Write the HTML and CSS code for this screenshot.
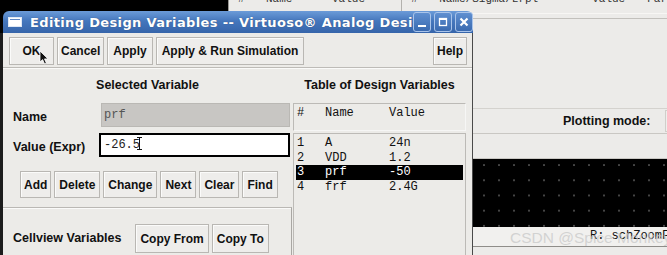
FILE: index.html
```html
<!DOCTYPE html>
<html lang="en">
<head>
    <meta charset="UTF-8">
    <title>Editing Design Variables</title>
    <link rel="stylesheet" href="styles.css">
</head>
<body>
    <div class="desktop">
        <!-- window behind the dialog -->
        <div class="backwin">
            <div class="bw-head">
                <div class="bw-cell first"><span class="c1">#</span><span class="c2">Name</span><span>Value</span></div>
                <div class="bw-cell"><span class="c1">#</span><span class="c3">Name/Sigma/Lrpl</span><span class="c4">Value</span><span>Par</span></div>
            </div>
            <div class="bw-top"></div>
            <div class="bw-mode">
                <span class="bw-label">Plotting mode:</span>
                <span class="bw-box"></span>
            </div>
            <div class="bw-gap"></div>
            <div class="bw-canvas"></div>
            <div class="bw-status">R: schZoomF</div>
            <div class="bw-bottom"></div>
        </div>

        <!-- dialog -->
        <div class="dialog">
            <div class="titlebar">
                <svg class="ticon" width="14" height="10" viewBox="0 0 14 10">
                    <rect x="0.5" y="0.5" width="13" height="9" fill="#fff" stroke="#dfe8f5"/>
                    <rect x="2" y="2" width="10" height="1" fill="#5d86c2"/>
                </svg>
                <span class="ttext">Editing Design Variables -- Virtuoso® Analog Desi</span>
                <div class="tbtns">
                    <span class="tbtn"><svg width="14" height="16" viewBox="0 0 14 16"><rect x="3" y="11" width="8" height="2" fill="#fff"/></svg></span>
                    <span class="tbtn"><svg width="14" height="16" viewBox="0 0 14 16"><rect x="3.5" y="4.5" width="7" height="7" fill="none" stroke="#fff" stroke-width="1.3"/><rect x="3.5" y="4.5" width="7" height="1.5" fill="#fff"/></svg></span>
                    <span class="tbtn"><svg width="14" height="16" viewBox="0 0 14 16"><path d="M3.5 4.5 L10.5 11.5 M10.5 4.5 L3.5 11.5" stroke="#fff" stroke-width="2.2"/></svg></span>
                </div>
            </div>
            <div class="dlg-body">
                <div class="toolbar">
                    <button class="btn ok">OK</button>
                    <button class="btn cancel">Cancel</button>
                    <button class="btn">Apply</button>
                    <button class="btn">Apply &amp; Run Simulation</button>
                    <button class="btn help">Help</button>
                </div>
                <div class="main">
                    <div class="left">
                        <div class="heading">Selected Variable</div>
                        <div class="field">
                            <span class="label">Name</span>
                            <div class="entry readonly">prf</div>
                        </div>
                        <div class="field">
                            <span class="label">Value (Expr)</span>
                            <div class="entry active">-26.5<svg class="ibeam" width="5" height="13" viewBox="0 0 5 13"><path d="M0 0.5 H5 M2.5 0.5 V12.5 M0 12.5 H5" stroke="#111" stroke-width="1" fill="none"/></svg></div>
                        </div>
                        <div class="actions">
                            <button class="btn sm add">Add</button>
                            <button class="btn sm">Delete</button>
                            <button class="btn sm">Change</button>
                            <button class="btn sm">Next</button>
                            <button class="btn sm">Clear</button>
                            <button class="btn sm">Find</button>
                        </div>
                        <div class="cellview">
                            <span class="label">Cellview Variables</span>
                            <button class="btn cv">Copy From</button>
                            <button class="btn cv">Copy To</button>
                        </div>
                    </div>
                    <div class="right">
                        <div class="heading">Table of Design Variables</div>
                        <div class="tbl-head">
                            <div class="row"><span class="num">#</span><span class="nm">Name</span><span>Value</span></div>
                        </div>
                        <div class="tbl-list">
                            <div class="row"><span class="num">1</span><span class="nm">A</span><span>24n</span></div>
                            <div class="row"><span class="num">2</span><span class="nm">VDD</span><span>1.2</span></div>
                            <div class="row sel"><span class="num">3</span><span class="nm">prf</span><span>-50</span></div>
                            <div class="row"><span class="num">4</span><span class="nm">frf</span><span>2.4G</span></div>
                        </div>
                    </div>
                </div>
            </div>
        </div>

        <svg class="pointer" width="11" height="15" viewBox="0 0 11 15">
            <path d="M1 1 L1 12 L3.6 9.6 L5.6 14 L7.4 13.2 L5.5 8.9 L9 8.9 Z" fill="#111" stroke="#fff" stroke-width="0.8"/>
        </svg>
        <div class="watermark">CSDN @Spice Monkey | |</div>
    </div>
</body>
</html>
```

FILE: styles.css
```css
body {
    margin: 0;
    background: #000;
}
.desktop {
    position: relative;
    width: 667px;
    height: 255px;
    overflow: hidden;
    background: #000;
    font-family: 'Liberation Sans', Arial, sans-serif;
    font-size: 12px;
    font-weight: bold;
    color: #111;
}

/* background window */
.backwin {
    position: absolute;
    left: 228px;
    top: 0;
    right: 0;
    bottom: 0;
    background: #ecebe9;
    display: flex;
    flex-direction: column;
}
.bw-head {
    height: 13px;
    display: flex;
    overflow: hidden;
    border-bottom: 1px solid #f7f6f4;
}
.bw-cell {
    display: flex;
    border-left: 1px solid #b3b1ad;
    padding-left: 9px;
    margin-top: -7px;
    font-family: 'Liberation Mono', monospace;
    font-weight: normal;
    font-size: 11px;
    line-height: 13px;
    color: #333;
}
.bw-cell.first {
    width: 175px;
    border-left-color: #9a9894;
}
.bw-cell .c1 { width: 28px; }
.bw-cell .c2 { width: 66px; }
.bw-cell .c3 { width: 153px; }
.bw-cell .c4 { width: 55px; }
.bw-top {
    height: 89px;
    margin-top: 4px;
    border-top: 1px solid #c2c0bc;
    border-bottom: 1px solid #d4d2ce;
}
.bw-mode {
    height: 24px;
    display: flex;
    align-items: center;
    gap: 14px;
    padding-left: 335px;
    border-bottom: 1px solid #c9c7c3;
    font-size: 12.5px;
    white-space: nowrap;
}
.bw-box {
    flex: none;
    width: 60px;
    height: 20px;
    border: 1px solid #d0ceca;
    background: #efeeec;
}
.bw-gap {
    height: 24px;
    border-bottom: 1px solid #c9c7c3;
}
.bw-canvas {
    height: 68px;
    background-color: #000;
    background-image: radial-gradient(circle, #8a8a8a 0, #8a8a8a 0.7px, transparent 1px);
    background-size: 15px 15.2px;
    background-position: 8.5px -1.5px;
}
.bw-status {
    height: 19px;
    line-height: 19px;
    padding-left: 362px;
    background: #f1f0ee;
    border-bottom: 1px solid #8f8d89;
    font-family: 'Liberation Mono', monospace;
    font-weight: normal;
    font-size: 12px;
    white-space: nowrap;
}
.bw-bottom {
    flex: 1;
    background: #ecebe9;
}

/* dialog */
.dialog {
    position: absolute;
    left: 0;
    top: 11px;
    width: 473px;
    bottom: 0;
    display: flex;
    flex-direction: column;
}
.titlebar {
    height: 22px;
    margin-left: 3px;
    border-radius: 6px 6px 0 0;
    background: linear-gradient(#6b9bd8, #4577bd 45%, #3665aa);
    display: flex;
    align-items: center;
    padding: 0 5px;
    color: #fff;
}
.ticon {
    flex: none;
    margin-right: 8px;
}
.ttext {
    font-family: 'DejaVu Sans', sans-serif;
    font-size: 13px;
    font-weight: bold;
    letter-spacing: 0.35px;
    white-space: nowrap;
    text-shadow: 0 0 1px rgba(0, 0, 0, 0.4);
}
.tbtns {
    margin-left: auto;
    display: flex;
    gap: 3px;
}
.tbtn {
    width: 16px;
    height: 18px;
    border: 1px solid #a9c4ea;
    border-radius: 3px;
    background: linear-gradient(#5f8fd0, #3a6ab0);
    display: flex;
    align-items: center;
    justify-content: center;
}
.dlg-body {
    flex: 1;
    background: #ecebe8;
    border-left: 3px solid #1c1c1c;
    border-right: 1px solid #4a4a4a;
    display: flex;
    flex-direction: column;
}
.btn {
    font: inherit;
    color: #111;
    height: 28px;
    padding: 0 4px;
    background: #eeedeb;
    border: 1px solid #b9b7b3;
    box-shadow: inset 1px 1px 0 #fbfbfa;
    border-radius: 0;
    white-space: nowrap;
}
.toolbar {
    height: 30px;
    flex: none;
    display: flex;
    align-items: flex-start;
    padding: 4px 5px 0 6px;
    gap: 3px;
    border-bottom: 1px solid #bdbbb7;
    box-shadow: 0 1px 0 #fafaf9;
}
.toolbar .btn { padding: 0 5px; }
.toolbar .ok { width: 45px; }
.toolbar .cancel { padding: 0 3px; }
.toolbar .help { margin-left: auto; padding: 0 3px; }

.main {
    flex: 1;
    display: grid;
    grid-template-columns: 289px 1fr;
}
.heading {
    height: 35px;
    line-height: 34px;
    text-align: center;
    font-size: 12.5px;
}
.left {
    display: flex;
    flex-direction: column;
}
.field {
    display: flex;
    align-items: center;
    padding-left: 10px;
    margin-bottom: 6px;
}
.label {
    width: 87px;
    flex: none;
    font-size: 12.5px;
    padding-top: 3px;
}
.entry {
    height: 22px;
    width: 185px;
    line-height: 22px;
    padding-left: 2px;
    font-family: 'Liberation Mono', monospace;
    font-weight: normal;
    font-size: 12px;
}
.entry.readonly {
    background: #c8c6c3;
    border: 1px solid #bab8b4;
    color: #555;
    margin-left: 1px;
}
.entry.active {
    width: 184px;
    height: 20px;
    line-height: 20px;
    border: 2px solid #000;
    background: #fff;
    margin-left: -1px;
    padding-left: 3px;
    color: #222;
}
.ibeam {
    margin-left: -3px;
    vertical-align: -2px;
}
.actions {
    display: flex;
    gap: 3px;
    padding: 8px 0 0 17px;
    height: 36px;
}
.actions .btn {
    height: 27px;
}
.actions .add { padding: 0 3px; }
.cellview {
    flex: 1;
    display: flex;
    align-items: flex-start;
    gap: 3px;
    padding: 16px 0 0 10px;
    border-top: 1px solid #bab8b4;
    box-shadow: inset 0 1px 0 #fafaf9;
    border-right: 1px solid #a9a7a3;
}
.cellview .label {
    width: auto;
    margin: 4px 11px 0 0;
}
.cellview .btn {
    height: 29px;
}

.right {
    display: flex;
    flex-direction: column;
    padding: 0 6px 0 1px;
}
.tbl-head {
    height: 24px;
    border: 1px solid #bcbab6;
    border-right-color: #f6f6f5;
    border-bottom-color: #f6f6f5;
    padding: 2px 2px 0;
}
.tbl-list {
    flex: 1;
    margin-top: 2px;
    border: 1px solid #bcbab6;
    border-bottom: none;
    padding: 2px 2px 0;
}
.row {
    display: flex;
    height: 14.5px;
    line-height: 14.5px;
    font-family: 'Liberation Mono', monospace;
    font-weight: normal;
    font-size: 12px;
    color: #111;
}
.row .num { width: 28px; padding-left: 1px; }
.row .nm { width: 64px; }
.row.sel {
    background: #000;
    color: #fff;
}

.pointer {
    position: absolute;
    left: 39px;
    top: 50px;
}
.watermark {
    position: absolute;
    left: 510px;
    top: 229px;
    font-family: 'Liberation Sans', Arial, sans-serif;
    font-weight: normal;
    font-size: 15.5px;
    color: rgba(200, 200, 200, 0.75);
    white-space: nowrap;
}
```
